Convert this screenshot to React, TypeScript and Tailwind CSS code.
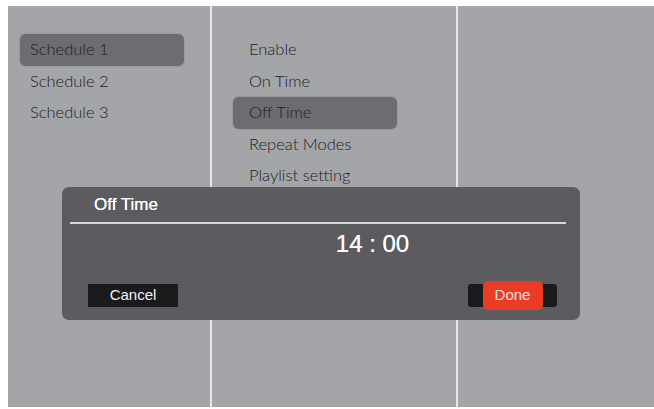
const schedules = ["Schedule 1", "Schedule 2", "Schedule 3"];
const options = ["Enable", "On Time", "Off Time", "Repeat Modes", "Playlist setting"];

export default function App() {
  return (
    <div className="relative w-[654px] h-[409px] bg-white pl-[8px] pt-[6px] pb-[2px] overflow-hidden font-['Lato',sans-serif]">
      <div className="flex h-full bg-[#a4a5a9]">
        {/* Schedule list */}
        <div className="w-[204px] shrink-0 border-r-2 border-[#e6e7ea] pt-[28px] pl-[12px]">
          {schedules.map((s, i) => (
            <div
              key={s}
              className={`flex items-center h-[31.5px] w-[164px] pl-[10px] rounded-[6px] text-[16.5px] font-light text-[#1c1c1e] ${
                i === 0 ? "bg-[#6c6c71] shadow-[0_0_2px_rgba(0,0,0,0.25)]" : ""
              }`}
            >
              {s}
            </div>
          ))}
        </div>

        {/* Options */}
        <div className="w-[246px] shrink-0 border-r-2 border-[#e6e7ea] pt-[28px] pl-[21px]">
          {options.map((o) => (
            <div
              key={o}
              className={`flex items-center h-[31.5px] w-[164px] pl-[16px] rounded-[6px] text-[16.5px] font-light text-[#1c1c1e] ${
                o === "Off Time" ? "bg-[#6c6c71] shadow-[0_0_2px_rgba(0,0,0,0.25)]" : ""
              }`}
            >
              {o}
            </div>
          ))}
        </div>

        <div className="flex-1" />
      </div>

      {/* Off Time dialog */}
      <div className="absolute left-[62px] top-[187px] w-[518px] h-[133px] rounded-[7px] bg-[#5c5c60] font-['Liberation_Sans',sans-serif] text-white">
        <div className="h-[35px] pl-[32px] pt-[8px] text-[17px] leading-[20px] [text-shadow:0_0_0.3px_#fff]">Off Time</div>
        <div className="ml-[8px] mr-[14px] h-[2px] bg-[#d6d6d8]" />
        <div className="flex justify-center pl-[103px] pt-[6px] text-[24px] leading-[28px] [text-shadow:0_0_0.5px_#fff]">14 : 00</div>
        <div className="flex items-center justify-between pl-[26px] pr-[23px] pt-[26px]">
          <div className="flex items-center justify-center w-[90px] h-[23px] bg-[#1b1b1d] text-[15px] text-[#f2f2f2]">Cancel</div>
          <div className="flex items-center justify-center w-[89px] h-[23px] rounded-[3px] bg-[#1b1b1d]">
            <div className="flex items-center justify-center w-[60px] h-[29px] rounded-[5px] bg-[#ec3b25] text-[15px] text-[#f4e6e2]">
              Done
            </div>
          </div>
        </div>
      </div>
    </div>
  );
}
